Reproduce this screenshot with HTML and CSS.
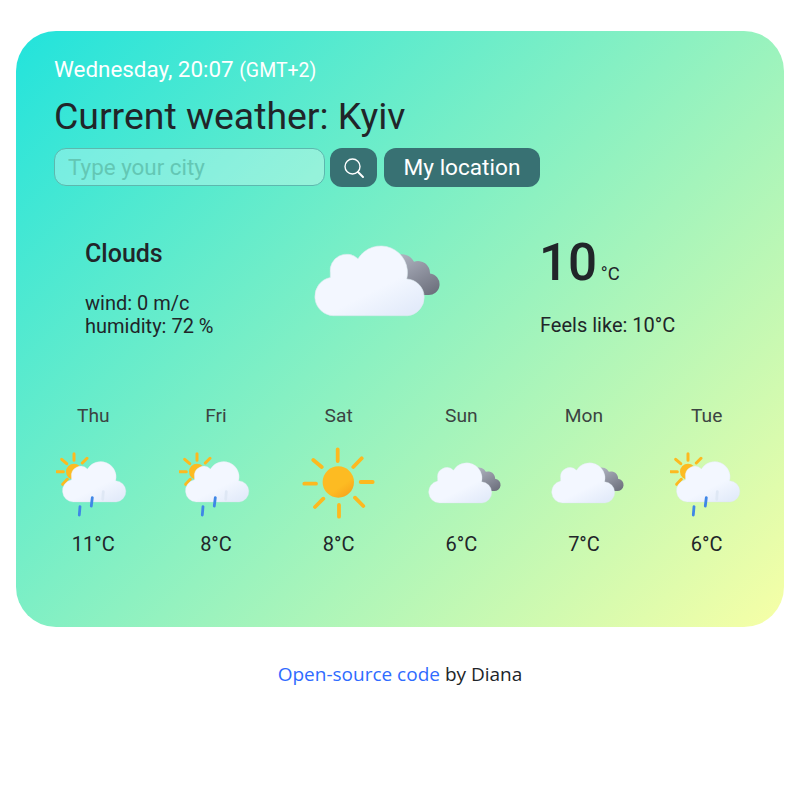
FILE: index.html
```html
<!DOCTYPE html>
<html lang="en">
<head>
    <meta charset="UTF-8">
    <meta name="viewport" content="width=device-width, initial-scale=1.0">
    <title>Weather</title>
    <link rel="stylesheet" href="styles.css">
</head>
<body>
    <svg class="sprite" aria-hidden="true">
        <defs>
            <linearGradient id="white-cloud" x1="0.25" y1="0.3" x2="0.8" y2="1">
                <stop offset="0.5" stop-color="#f3f7ff" />
                <stop offset="1" stop-color="#e3ebfa" />
            </linearGradient>
            <linearGradient id="dark-cloud" x1="0.2" y1="0" x2="0.8" y2="1">
                <stop offset="0" stop-color="#acb0bd" />
                <stop offset="1" stop-color="#6d707d" />
            </linearGradient>
            <linearGradient id="sun-disc" x1="0.3" y1="0.3" x2="0.8" y2="1">
                <stop offset="0.5" stop-color="#fdbb22" />
                <stop offset="1" stop-color="#f8a31a" />
            </linearGradient>
            <path id="white-shape" d="M21.5 72.7A19.3 19.3 0 0 1 18.3 34.5V30A16.5 16.5 0 0 1 46 15.7A26.7 26.7 0 0 1 94.7 36A18.4 18.4 0 0 1 95.5 72.7Z" fill="url(#white-cloud)" stroke="#dbe9ee" stroke-width="0.6" />
        </defs>
        <symbol id="clouds" viewBox="0 0 130 76">
            <path d="M85 52H115.5A10.7 10.7 0 0 0 118 30.5A12 12 0 0 0 102 18.7A14 14 0 0 0 85 12Z" fill="url(#dark-cloud)" />
            <use href="#white-shape" />
        </symbol>
        <symbol id="rain" viewBox="0 0 74 72">
            <g class="rays">
                <path d="M18 4.7V11.3M26.3 14L31 9.3M0.7 22.7H7.3M5.7 10.3L10.7 14.7M6.7 35.3L11.3 30.3" />
            </g>
            <circle cx="18" cy="22.7" r="8" fill="url(#sun-disc)" />
            <use href="#white-shape" transform="translate(4.8 10.8) scale(0.58)" />
            <path class="drop" d="M24 57.7L23.3 66M36.3 48.7L35.3 57" />
            <path class="drop-pale" d="M47.3 42.7L46.7 50.3" />
        </symbol>
        <symbol id="sun" viewBox="0 0 78 76">
            <g class="rays rays-big">
                <path d="M37.7 4.3V16M60.7 37H72.7M4.3 38.7H16M39 60V71.7M53.3 22L61.7 13.3M13.3 15L21.7 22M15 62L23.3 53.7M55 52.7L63.3 61" />
            </g>
            <circle cx="38.3" cy="37" r="15.7" fill="url(#sun-disc)" />
        </symbol>
    </svg>

    <main class="card">
        <p class="date">Wednesday, 20:07 <small>(GMT+2)</small></p>
        <h1 class="city">Current weather: Kyiv</h1>

        <form class="search">
            <input class="search-input" type="text" placeholder="Type your city">
            <button class="btn btn-icon" type="button" aria-label="Search">
                <svg viewBox="0 0 24 24" width="24" height="24">
                    <circle cx="10.5" cy="10.5" r="7.5" fill="none" stroke="#fff" stroke-width="1.4" />
                    <path d="M16 16L21 21" stroke="#fff" stroke-width="2" stroke-linecap="round" />
                </svg>
            </button>
            <button class="btn btn-text" type="button">My location</button>
        </form>

        <section class="current">
            <div class="conditions">
                <h2 class="description">Clouds</h2>
                <p class="details">wind: 0 m/c<br>humidity: 72 %</p>
            </div>
            <svg class="current-icon"><use href="#clouds" /></svg>
            <div class="temperature">
                <p class="degrees"><strong>10</strong> <span class="unit">°C</span></p>
                <p class="feels">Feels like: 10°C</p>
            </div>
        </section>

        <section class="forecast">
            <div class="day">
                <span class="day-name">Thu</span>
                <svg class="day-icon icon-rain"><use href="#rain" /></svg>
                <span class="day-temp">11°C</span>
            </div>
            <div class="day">
                <span class="day-name">Fri</span>
                <svg class="day-icon icon-rain"><use href="#rain" /></svg>
                <span class="day-temp">8°C</span>
            </div>
            <div class="day">
                <span class="day-name">Sat</span>
                <svg class="day-icon icon-sun"><use href="#sun" /></svg>
                <span class="day-temp">8°C</span>
            </div>
            <div class="day">
                <span class="day-name">Sun</span>
                <svg class="day-icon icon-clouds"><use href="#clouds" /></svg>
                <span class="day-temp">6°C</span>
            </div>
            <div class="day">
                <span class="day-name">Mon</span>
                <svg class="day-icon icon-clouds"><use href="#clouds" /></svg>
                <span class="day-temp">7°C</span>
            </div>
            <div class="day">
                <span class="day-name">Tue</span>
                <svg class="day-icon icon-rain"><use href="#rain" /></svg>
                <span class="day-temp">6°C</span>
            </div>
        </section>
    </main>

    <footer class="credit"><a href="#">Open-source code</a> by Diana</footer>
</body>
</html>
```

FILE: styles.css
```css
body {
    margin: 0;
    padding: 31px 16px 0;
    font-family: Roboto, sans-serif;
    color: #212529;
    background: #fff;
}

p, h1, h2 {
    margin: 0;
    font-weight: 400;
}

.sprite {
    display: block;
    width: 0;
    height: 0;
}

.rays path {
    fill: none;
    stroke: #fdb91f;
    stroke-width: 3;
    stroke-linecap: round;
}

.rays-big path {
    stroke-width: 3.8;
}

.drop {
    fill: none;
    stroke: #3f87e6;
    stroke-width: 2.8;
    stroke-linecap: round;
}

.drop-pale {
    fill: none;
    stroke: #dfe8f5;
    stroke-width: 2.8;
    stroke-linecap: round;
}

.card {
    height: 596px;
    box-sizing: border-box;
    padding: 24px 16px 0;
    border-radius: 40px;
    background: linear-gradient(135deg, #22e3dc 0%, #f7ffa6 100%);
}

.date {
    padding-left: 22px;
    font-size: 22.4px;
    line-height: 28px;
    color: #fff;
}

.date small {
    font-size: 19.5px;
}

.city {
    padding-left: 22px;
    margin-top: 8px;
    font-size: 37.4px;
    line-height: 46px;
}

.search {
    display: flex;
    gap: 5px;
    margin-top: 9px;
    padding-left: 22px;
}

.search-input {
    width: 271px;
    height: 38px;
    box-sizing: border-box;
    padding: 0 13px;
    border: 1px solid #5cb8ae;
    border-radius: 12px;
    background: rgba(255, 255, 255, 0.3);
    font-family: inherit;
    font-size: 22.4px;
    outline: none;
}

.search-input::placeholder {
    color: #63c7b4;
}

.btn {
    height: 39px;
    border: none;
    border-radius: 12px;
    background: #387173;
    color: #fff;
    font-family: inherit;
}

.btn-icon {
    display: flex;
    align-items: center;
    justify-content: center;
    width: 47px;
    padding: 0;
}

.btn-text {
    width: 156px;
    margin-left: 2px;
    font-size: 22.6px;
}

.current {
    display: grid;
    grid-template-columns: 227px 228px 1fr;
    margin-top: 40px;
    padding-left: 53px;
}

.description {
    margin-top: 12px;
    font-size: 25px;
    font-weight: 500;
    line-height: 30px;
}

.details {
    margin-top: 23px;
    font-size: 20px;
    line-height: 23px;
}

.current-icon {
    width: 130px;
    height: 76px;
    margin-top: 16px;
    margin-left: -99px;
    justify-self: center;
}

.degrees {
    font-size: 18.5px;
    line-height: 72px;
}

.degrees strong {
    margin-left: -1px;
    font-size: 51.2px;
    font-weight: 500;
}

.unit {
    margin-left: -1px;
}

.feels {
    margin-top: 3px;
    font-size: 20px;
    line-height: 24px;
}

.forecast {
    display: grid;
    grid-template-columns: repeat(6, 1fr);
    margin-top: 66px;
}

.day {
    display: flex;
    flex-direction: column;
    align-items: center;
    font-size: 20px;
    line-height: 24px;
}

.day-name {
    font-size: 19.2px;
    color: #3c4442;
}

.day-icon {
    display: block;
    height: 76px;
    margin: 17px 0 11px;
}

.icon-rain {
    width: 74px;
    height: 72px;
    margin: 21px 0 11px;
}

.icon-sun {
    width: 78px;
}

.icon-clouds {
    width: 75px;
    height: 44px;
    margin: 33px 0 27px 7px;
}

.credit {
    margin-top: 35px;
    font-family: "Open Sans", sans-serif;
    font-size: 19px;
    line-height: 24px;
    text-align: center;
}

.credit a {
    color: #2f6bff;
    text-decoration: none;
}
```
